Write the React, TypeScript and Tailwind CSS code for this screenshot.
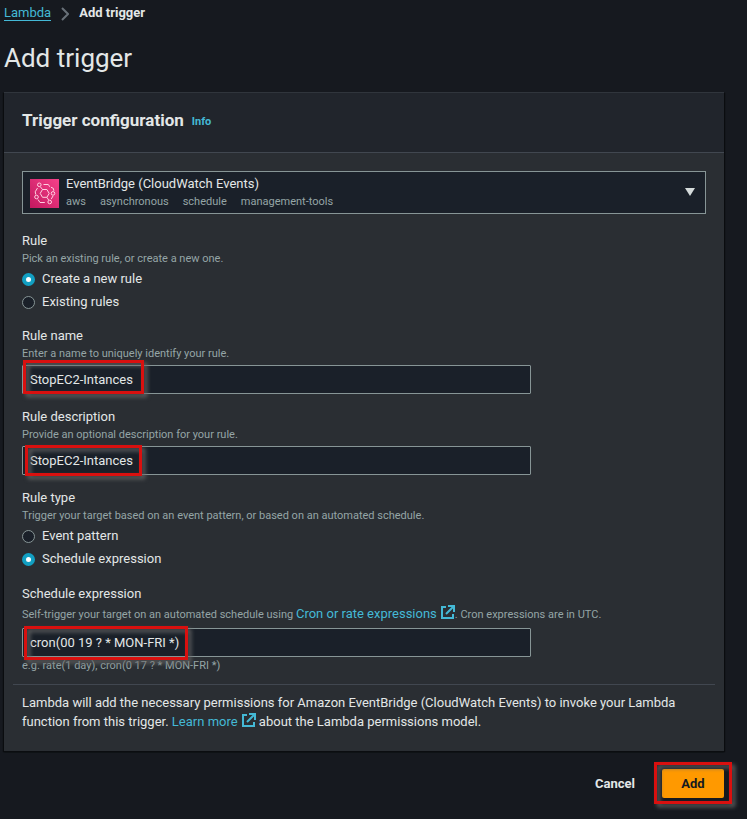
import type { ReactNode } from "react";

function ExternalIcon() {
  return (
    <svg viewBox="0 0 14 14" className="ml-1 inline-block size-[14px] align-[-1px]" fill="none" stroke="currentColor" strokeWidth="2" aria-hidden="true">
      <path d="M5 2H1v11h11V9" />
      <path d="M7 1h6v6M12.500 1.500L5 9" />
    </svg>
  );
}

function EventBridgeIcon() {
  return (
    <svg viewBox="0 0 29 29" className="pointer-events-none absolute left-2 top-2 size-[29px]" fill="none" stroke="#ffd0e2" strokeWidth="1" aria-hidden="true">
      <defs>
        <linearGradient id="eb" x1="0" y1="1" x2="1" y2="0">
          <stop offset="0" stopColor="#c2185f" />
          <stop offset="1" stopColor="#f5418a" />
        </linearGradient>
      </defs>
      <rect width="29" height="29" fill="url(#eb)" stroke="none" />
      <path d="M12.500 10.500h4.400l2.300 3.900-2.300 3.900h-4.400l-2.300-3.900z" />
      <circle cx="9.300" cy="5.800" r="1.800" />
      <circle cx="23" cy="14.400" r="1.800" />
      <circle cx="6.500" cy="18" r="1.800" />
      <circle cx="19.700" cy="23" r="1.800" />
      <path d="M10.300 7.700l2.200 2.800M16.900 18.300l1.800 2.800" />
      <path d="M13.500 5.500h4.800l1.500 2.300M21 8.300l2.300 1 .6 2.500M7.500 9l-2.300 3.800.6 2.800M8 20.500l2 3h4.800M23 17l-1.800 3.200" />
    </svg>
  );
}

function Mark({ className }: { className: string }) {
  return <span aria-hidden="true" className={`pointer-events-none absolute border-[3px] border-[#d9100f] drop-shadow-[3px_3px_2px_#666666] ${className}`} />;
}

function Hint({ id, className = "leading-[18px]", children }: { id: string; className?: string; children: ReactNode }) {
  return <p id={id} className={`text-[11px] text-[#95a5a6] ${className}`}>{children}</p>;
}

function Radio({ name, label, checked = false }: { name: string; label: string; checked?: boolean }) {
  return (
    <label className="flex h-[23px] items-center gap-[7px] pb-px">
      <input
        type="radio"
        name={name}
        defaultChecked={checked}
        className="mt-px size-[13px] appearance-none rounded-full border border-[#879596] bg-[#1a2029] checked:border-4 checked:border-[#129fc2] checked:bg-white"
      />
      {label}
    </label>
  );
}

type FieldProps = { id: string; label: string; hint: ReactNode; hintClass?: string; value: string; mark: string; after?: ReactNode };

function Field({ id, label, hint, hintClass, value, mark, after }: FieldProps) {
  return (
    <div>
      <label htmlFor={id} className="block leading-[18px]">{label}</label>
      <Hint id={`${id}-hint`} className={hintClass}>{hint}</Hint>
      <div className="relative mt-[2px] w-[509px] max-w-full">
        <input id={id} aria-describedby={`${id}-hint`} defaultValue={value} className="block h-[29px] w-full rounded-[1px] border border-[#879596] bg-[#1a2029] px-[7px]" />
        <Mark className={mark} />
      </div>
      {after}
    </div>
  );
}

export default function App() {
  return (
    <div className="min-h-screen bg-[#16191f] pr-[23px] pl-1 font-['Roboto',sans-serif] text-[13px] leading-[18px] text-[#e3e7e7]">
      <nav aria-label="Breadcrumb" className="flex h-[26px] items-center">
        <a href="#lambda" className="border-b border-[#44b9d6] leading-[15px] text-[#44b9d6]">Lambda</a>
        <svg viewBox="0 0 8 14" className="mx-[10px] mt-[2px] h-[14px] w-2" fill="none" stroke="#687078" strokeWidth="2" aria-hidden="true">
          <path d="M1 1l6 6-6 6" />
        </svg>
        <span className="font-bold">Add trigger</span>
      </nav>
      <h1 className="pt-4 pb-[18px] text-[26px] leading-8">Add trigger</h1>

      <form>
        <section className="border-t border-[#30353c] bg-[#2a2e33] shadow-[0_1px_1px_#0b0d10,1px_1px_1px_#0b0d10,-1px_1px_1px_#0b0d10]">
          <header className="flex h-[60px] items-center gap-2 border-b border-[#414750] bg-[#21252c] px-[18px] pb-[5px]">
            <h2 className="text-[17px] font-bold">Trigger configuration</h2>
            <a href="#info" className="pt-1 text-[11px] font-bold text-[#44b9d6]">Info</a>
          </header>

          <div className="px-[18px] pt-[18px]">
            <div className="relative">
              <select aria-label="Trigger source" className="block h-[43px] w-full appearance-none border border-[#879596] bg-[#1a2029] pb-[17px] pl-[43px]">
                <option>EventBridge (CloudWatch Events)</option>
              </select>
              <EventBridgeIcon />
              <div className="pointer-events-none absolute top-[22px] left-11 flex gap-[14px] text-[11px] text-[#95a5a6]">
                <span>aws</span>
                <span>asynchronous</span>
                <span>schedule</span>
                <span>management-tools</span>
              </div>
              <svg viewBox="0 0 10 8" className="pointer-events-none absolute top-[17px] right-[11px] h-2 w-[10px]" fill="#d5dbdb" aria-hidden="true">
                <path d="M0 0h10L5 8z" />
              </svg>
            </div>

            <fieldset className="mt-[18px]" aria-describedby="rule-hint">
              <legend className="leading-[18px]">Rule</legend>
              <Hint id="rule-hint">Pick an existing rule, or create a new one.</Hint>
              <Radio name="rule" label="Create a new rule" checked />
              <Radio name="rule" label="Existing rules" />
            </fieldset>

            <div className="mt-[13px] flex flex-col gap-[14px]">
              <Field id="rule-name" label="Rule name" hint="Enter a name to uniquely identify your rule." value="StopEC2-Intances" mark="left-px -top-[5px] h-[34px] w-[121px]" />
              <Field id="rule-description" label="Rule description" hint="Provide an optional description for your rule." value="StopEC2-Intances" mark="left-[3px] -top-px h-[31px] w-[117px]" />
              <fieldset aria-describedby="type-hint">
                <legend className="leading-[18px]">Rule type</legend>
                <Hint id="type-hint">Trigger your target based on an event pattern, or based on an automated schedule.</Hint>
                <Radio name="type" label="Event pattern" />
                <Radio name="type" label="Schedule expression" checked />
              </fieldset>
              <Field
                id="schedule"
                label="Schedule expression"
                hint={
                  <>
                    Self-trigger your target on an automated schedule using{" "}
                    <a href="#cron" className="text-[13px] text-[#44b9d6]">Cron or rate expressions<ExternalIcon /></a>. Cron expressions are in UTC.
                  </>
                }
                hintClass="leading-[22px]"
                value="cron(00 19 ? * MON-FRI *)"
                mark="left-[2px] -top-[2px] h-[34px] w-[164px]"
                after={<Hint id="schedule-example">e.g. rate(1 day), cron(0 17 ? * MON-FRI *)</Hint>}
              />
            </div>
          </div>

          <hr className="mx-[9px] mt-[9px] border-[#414750]" />
          <p className="px-[18px] pt-2 pb-[20px] leading-[19px]">
            Lambda will add the necessary permissions for Amazon EventBridge (CloudWatch Events) to invoke your Lambda function from this trigger.{" "}
            <a href="#learn" className="text-[#44b9d6]">Learn more<ExternalIcon /></a> about the Lambda permissions model.
          </p>
        </section>

        <div className="mt-[18px] flex items-center justify-end gap-[27px] font-bold">
          <button type="button">Cancel</button>
          <div className="relative">
            <button type="submit" className="block h-[29px] w-[62px] rounded-[2px] bg-[#ff9900] text-[#16191f]">Add</button>
            <Mark className="-top-[7px] -left-2 h-[42px] w-[78px]" />
          </div>
        </div>
      </form>
    </div>
  );
}
